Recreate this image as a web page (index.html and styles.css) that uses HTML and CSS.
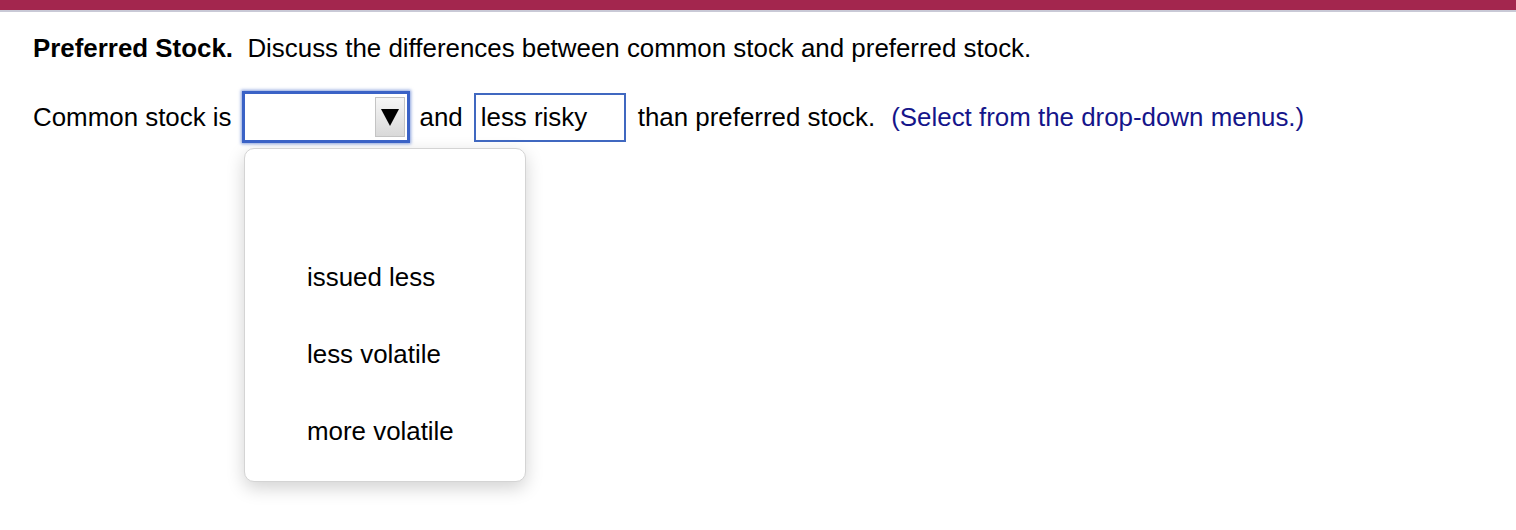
FILE: index.html
```html
<!DOCTYPE html>
<html>
<head>
<meta charset="utf-8">
<link rel="stylesheet" href="styles.css">
</head>
<body>
<div class="topbar"></div>
<div class="content">
  <p class="question"><b>Preferred Stock.</b>&nbsp; Discuss the differences between common stock and preferred stock.</p>
  <div class="answer">
    <span class="txt">Common stock is</span>
    <div class="select">
      <span class="arrow-btn"><span class="tri"></span></span>
    </div>
    <span class="txt and">and</span>
    <div class="filled">less risky</div>
    <span class="txt than">than preferred stock.</span>
    <span class="txt hint">(Select from the drop-down menus.)</span>
  </div>
  <div class="choices">
    <div class="opt">&nbsp;</div>
    <div class="opt">issued less</div>
    <div class="opt">less volatile</div>
    <div class="opt">more volatile</div>
  </div>
</div>
</body>
</html>
```
FILE: styles.css
```css
html, body {
  margin: 0;
  padding: 0;
  background: #fff;
  min-height: 530px;
}
body {
  font-family: "Liberation Sans", Arial, Helvetica, sans-serif;
  font-size: 25.9px;
  color: #000;
}
.topbar {
  height: 10px;
  background: #a3264e;
  border-bottom: 2px solid #c9c9d6;
}
.content {
  padding: 0 0 40px 33px;
}
.question {
  margin: 0;
  padding-top: 21px;
  line-height: 30px;
  white-space: nowrap;
}
.answer {
  display: flex;
  align-items: center;
  margin-top: 28px;
  white-space: nowrap;
}
.txt {
  line-height: 30px;
}
.select {
  box-sizing: border-box;
  margin-left: 10px;
  width: 168px;
  height: 52px;
  border: 3px solid #3a62c6;
  box-shadow: 0 0 3px 1px rgba(58, 98, 198, 0.6);
  background: #fff;
  display: flex;
  justify-content: flex-end;
  align-items: center;
  padding-right: 2px;
}
.arrow-btn {
  box-sizing: border-box;
  width: 30px;
  height: 40px;
  border: 1px solid #c4c4c4;
  background: linear-gradient(#f6f6f6, #d9d9d9);
  display: flex;
  align-items: center;
  justify-content: center;
}
.tri {
  width: 0;
  height: 0;
  border-left: 9px solid transparent;
  border-right: 9px solid transparent;
  border-top: 17px solid #000;
}
.choices {
  box-sizing: border-box;
  margin-left: 211px;
  margin-top: 5px;
  width: 282px;
  padding: 13px 0 11px;
  background: #fff;
  border: 1px solid #d4d4d4;
  border-radius: 10px;
  box-shadow: 0 6px 18px rgba(0, 0, 0, 0.18);
}
.opt {
  height: 77px;
  line-height: 77px;
  padding-left: 62px;
}
.and {
  margin-left: 10px;
}
.filled {
  box-sizing: border-box;
  margin-left: 11px;
  width: 152px;
  height: 49px;
  border: 2px solid #4068c0;
  padding-left: 5px;
  line-height: 45px;
}
.than {
  margin-left: 12px;
}
.hint {
  margin-left: 16px;
  color: #15158a;
}
```
